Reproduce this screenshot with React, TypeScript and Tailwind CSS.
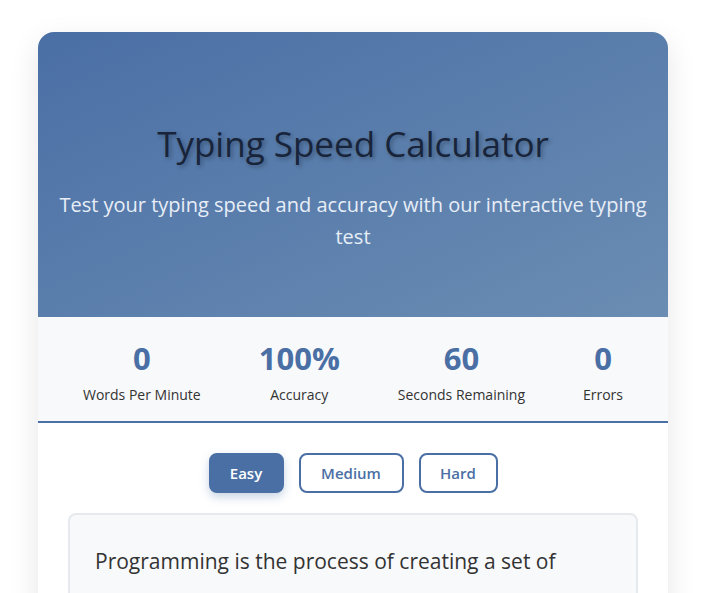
export default function App() {
  const stats = [
    { value: "0", label: "Words Per Minute" },
    { value: "100%", label: "Accuracy" },
    { value: "60", label: "Seconds Remaining" },
    { value: "0", label: "Errors" },
  ];

  return (
    <div className="min-h-screen bg-white pt-8 pb-8" style={{ fontFamily: '"Segoe UI", "Open Sans", sans-serif' }}>
      <div className="ml-[38px] w-[630px] overflow-hidden rounded-2xl bg-white shadow-[0_10px_30px_rgba(0,0,0,0.1)]">
        {/* Header */}
        <div className="bg-gradient-to-br from-[#4a6fa5] to-[#6b8db3] px-[18px] pt-[91px] pb-[64px] text-center">
          <h1 className="mb-[24px] text-[35px] leading-[42px] font-medium text-[#18243a] [text-shadow:2px_2px_4px_rgba(0,0,0,0.3)]">
            Typing Speed Calculator
          </h1>
          <p className="text-[20px] leading-[32px] text-[#e8eef7]">
            Test your typing speed and accuracy with our interactive typing test
          </p>
        </div>

        {/* Stats */}
        <div className="flex justify-around border-b-2 border-[#4a6fa5] bg-[#f8f9fb] px-4 pt-[21px] pb-[16px]">
          {stats.map((s) => (
            <div key={s.label} className="flex flex-col items-center px-2">
              <div className="text-[31px] leading-[40px] font-bold text-[#4a6fa5]">{s.value}</div>
              <div className="mt-[7px] text-[14px] leading-[20px] text-[#333]">{s.label}</div>
            </div>
          ))}
        </div>

        {/* Difficulty */}
        <div className="flex justify-center gap-[15px] pt-[30px] pb-[20px]">
          <button className="h-10 w-[75px] rounded-lg border-2 border-[#4a6fa5] bg-[#4a6fa5] text-[15px] font-semibold text-white shadow-[0_4px_10px_rgba(74,111,165,0.3)]">
            Easy
          </button>
          <button className="h-10 w-[105px] rounded-lg border-2 border-[#4a6fa5] bg-white text-[15px] font-semibold text-[#4a6fa5]">
            Medium
          </button>
          <button className="h-10 w-[79px] rounded-lg border-2 border-[#4a6fa5] bg-white text-[15px] font-semibold text-[#4a6fa5]">
            Hard
          </button>
        </div>

        {/* Text display */}
        <div className="mx-[30px] mb-8 rounded-lg border-2 border-[#e6e9ee] bg-[#f8f9fa] px-[25px] pt-[26px] pb-6">
          <p className="text-[21px] leading-[40px] text-[#333]">
            Programming is the process of creating a set of instructions that tell a computer how to perform a task.
          </p>
        </div>
      </div>
    </div>
  );
}
